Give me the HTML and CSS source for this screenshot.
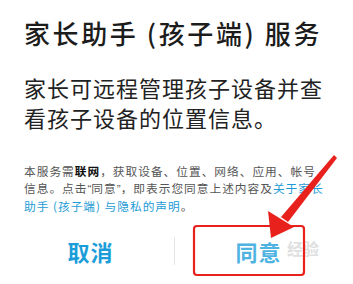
FILE: index.html
```html
<!DOCTYPE html>
<html lang="zh-CN">
<head>
<meta charset="utf-8">
<link rel="stylesheet" href="styles.css">
</head>
<body>
<div class="dialog">
  <h1 class="title">家长助手 (孩子端) 服务</h1>
  <p class="desc">家长可远程管理孩子设备并查<br>看孩子设备的位置信息。</p>
  <p class="note">本服务需<b>联网</b>，获取设备、位置、网络、应用、帐号<br>信息。点击<span class="q">“</span>同意<span class="q">”</span>，即表示您同意上述内容及<span class="link">关于家长<br>助手 (孩子端) 与隐私的声明</span>。</p>
  <div class="actions">
    <button class="btn btn-cancel">取消</button>
    <span class="divider"></span>
    <button class="btn btn-ok">同意</button>
  </div>
  <div class="watermark">经验</div>
  <svg class="annot" width="353" height="284" viewBox="0 0 353 284">
    <rect x="194" y="226" width="110" height="49" rx="3" ry="3" fill="none" stroke="#e8211d" stroke-width="2.2"/>
    <polygon points="334,155 337,158 288,222 281,217" fill="#e8211d"/>
    <polygon points="271,238 268,211 294,227" fill="#e8211d"/>
  </svg>
</div>
</body>
</html>
```

FILE: styles.css
```css
html, body {
  margin: 0;
  padding: 0;
  background: #ffffff;
}
body {
  font-family: "Noto Sans CJK SC", "Noto Sans", sans-serif;
  width: 353px;
  height: 284px;
  overflow: hidden;
}
.dialog {
  position: relative;
  width: 353px;
  height: 284px;
  box-sizing: border-box;
  padding: 0 0 0 24px;
  background: #fff;
}
.title {
  margin: 0;
  padding-top: 14px;
  font-size: 26px;
  line-height: 38px;
  font-weight: 500;
  letter-spacing: 2.6px;
  color: #1c1c1c;
  white-space: nowrap;
}
.desc {
  margin: 20px 0 0 0;
  font-size: 22px;
  line-height: 30px;
  letter-spacing: 1px;
  color: #222;
  white-space: nowrap;
}
.note {
  margin: 30px 0 0 0;
  font-size: 11.7px;
  line-height: 17px;
  letter-spacing: 1px;
  color: #555;
  white-space: nowrap;
}
.note b {
  color: #111;
  font-weight: 700;
}
.q {
  font-family: "Liberation Sans", sans-serif;
  letter-spacing: 0;
}
.link {
  color: #1e9bd6;
}
.actions {
  display: grid;
  grid-template-columns: 1fr 1px 1fr;
  align-items: center;
  margin: 12px 0 0 -24px;
  padding: 0 11px 0 7px;
  height: 50px;
}
.btn {
  border: none;
  background: none;
  padding: 0;
  font-family: inherit;
  font-size: 22px;
  font-weight: 700;
  letter-spacing: 1px;
  color: #1a9dd8;
  line-height: 30px;
}
.btn-ok {
  color: #4fb3e2;
}
.divider {
  width: 1px;
  height: 28px;
  background: #e4e4e4;
}
.watermark {
  position: absolute;
  left: 287px;
  top: 238px;
  font-size: 16px;
  line-height: 20px;
  font-weight: 700;
  color: #e0e0e0;
  pointer-events: none;
}
.annot {
  position: absolute;
  left: 0;
  top: 0;
  pointer-events: none;
}
```
